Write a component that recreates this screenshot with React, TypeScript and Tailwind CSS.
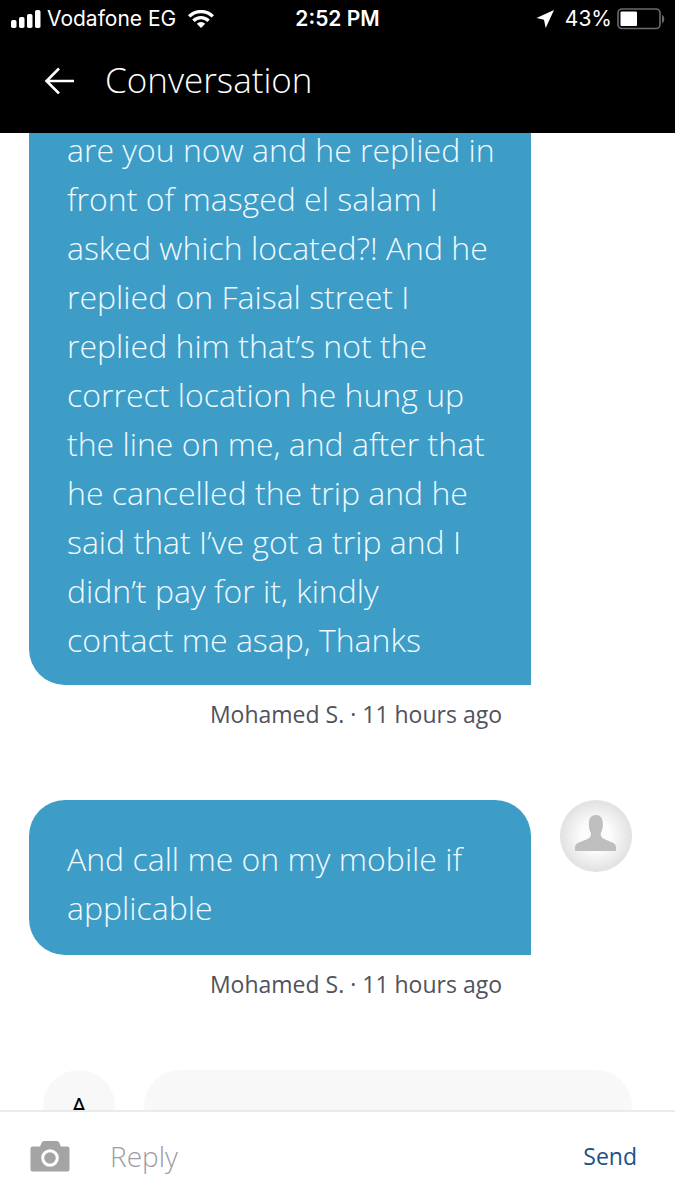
const messages = [
    {
        id: 1,
        text: 'are you now and he replied in\nfront of masged el salam I\nasked which located?! And he\nreplied on Faisal street I\nreplied him that’s not the\ncorrect location he hung up\nthe line on me, and after that\nhe cancelled the trip and he\nsaid that I’ve got a trip and I\ndidn’t pay for it, kindly\ncontact me asap, Thanks',
        meta: 'Mohamed S. · 11 hours ago',
        continued: true,
    },
    {
        id: 2,
        text: 'And call me on my mobile if\napplicable',
        meta: 'Mohamed S. · 11 hours ago',
        continued: false,
    },
];

function StatusBar() {
    return (
        <div className="grid h-[37px] grid-cols-[1fr_auto_1fr] items-center px-[10px] font-['Inter',sans-serif] text-[21px]">
            <div className="flex items-center">
                <svg className="h-[18px] w-[31px] shrink-0" viewBox="0 0 31 18" fill="currentColor">
                    <rect x="1" y="10" width="5.500" height="8" rx="1.8" />
                    <rect x="9" y="7" width="5.500" height="11" rx="1.8" />
                    <rect x="17" y="4" width="5.500" height="14" rx="1.8" />
                    <rect x="25" y="0" width="5.500" height="18" rx="1.8" />
                </svg>
                <span className="ml-[6px] whitespace-nowrap">Vodafone EG</span>
                <svg className="ml-[12px] h-[18px] w-[26px] shrink-0" viewBox="0 0 26 18" fill="none" stroke="currentColor" strokeWidth="3.4">
                    <path d="M1.2 6.4a16.7 16.7 0 0 1 23.6 0" />
                    <path d="M5.4 10.8a10.8 10.8 0 0 1 15.2 0" />
                    <path d="M13 18l-4.2-4.2a6 6 0 0 1 8.4 0z" fill="currentColor" stroke="none" />
                </svg>
            </div>
            <span className="text-center font-semibold">2:52 PM</span>
            <div className="flex items-center justify-end">
                <svg className="h-[18px] w-[18px]" viewBox="0 0 18 18" fill="currentColor">
                    <path d="M18 0L9.700 18L8 9.700L0.500 8z" />
                </svg>
                <span className="ml-[11px]">43%</span>
                <svg className="ml-[5px] h-[22px] w-[48px]" viewBox="0 0 48 22">
                    <rect x="1" y="1" width="42" height="19.5" rx="4" fill="none" stroke="#6b6b6b" strokeWidth="1.6" />
                    <rect x="3.5" y="3.5" width="16.5" height="14.5" rx="1" fill="#fff" />
                    <path d="M45 7c3 1 3 7 0 8z" fill="#6b6b6b" />
                </svg>
            </div>
        </div>
    );
}

function UserAvatar() {
    return (
        <svg className="h-[72px] w-[72px] shrink-0" viewBox="0 0 72 72" role="img" aria-label="Mohamed S.">
            <defs>
                <radialGradient id="avatar">
                    <stop offset="40%" stopColor="#fcfcfc" />
                    <stop offset="100%" stopColor="#e1e1e1" />
                </radialGradient>
            </defs>
            <circle cx="36" cy="36" r="36" fill="url(#avatar)" />
            <path
                d="M15 51v-3.500c0-2.500 1.500-4 4.500-5.200l7.500-3c3-1.200 4.200-2.800 4-6c-1.200-2-1.700-4-2-6.500c-.8-7.500 1.500-11.800 6.900-11.800s7.600 4.300 6.800 11.800c-.3 2.500-.9 4.500-2 6.500c-.2 3.200 1 4.800 4 6l7 3c3 1.200 4.300 2.700 4.300 5.200v3.500z"
                fill="#bebebe"
            />
        </svg>
    );
}

export default function App() {
    return (
        <div className="flex h-screen flex-col overflow-hidden bg-white font-['Open_Sans',sans-serif]">
            <header className="z-10 shrink-0 bg-black text-white">
                <StatusBar />
                <div className="flex h-[96px] items-center pb-[10px] pl-[41px]">
                    <button type="button" aria-label="Back">
                        <svg className="h-[28px] w-[36px]" viewBox="0 0 36 28" fill="none" stroke="currentColor" strokeWidth="2.6">
                            <path d="M33 15H5M18 2.500L5.500 15L18 27.500" />
                        </svg>
                    </button>
                    <h1 className="ml-[28px] text-[35px] font-light">Conversation</h1>
                </div>
            </header>

            <main className="min-h-0 flex-1 overflow-hidden">
                {/* list is scrolled, so the first bubble runs under the header */}
                <div className="-mt-2">
                    {messages.map((message) => (
                        <section key={message.id} className="mb-[71px]">
                            <div className="flex gap-[29px] pl-[29px] pr-[43px]">
                                <p
                                    className={`min-w-0 flex-1 whitespace-pre-line rounded-bl-[36px] bg-[#3d9dc7] pl-[38px] text-[32px] font-light leading-[49px] text-[#f0faff] ${
                                        message.continued ? 'pb-[21px]' : 'rounded-t-[36px] pb-[23px] pt-[34px]'
                                    }`}
                                >
                                    {message.text}
                                </p>
                                {message.continued ? <div className="w-[72px] shrink-0" /> : <UserAvatar />}
                            </div>
                            <p className="mr-[173px] mt-[14px] text-right text-[23px] leading-[30px] text-[#51525c]">{message.meta}</p>
                        </section>
                    ))}

                    <section className="flex gap-[29px] pl-[43px] pr-[43px]">
                        <div className="flex h-[72px] w-[72px] shrink-0 items-center justify-center rounded-full bg-[#f8f8f8] text-[26px] font-medium text-black">A</div>
                        <div className="h-[120px] flex-1 rounded-t-[36px] bg-[#f8f8f8]" />
                    </section>
                </div>
            </main>

            <footer className="z-10 flex h-[90px] shrink-0 items-center border-t-2 border-[#ebebeb] bg-white pl-[30px] pr-[38px]">
                <button type="button" aria-label="Add photo" className="text-[#a5a4a5]">
                    <svg className="h-[31px] w-[40px]" viewBox="0 0 40 31">
                        <path d="M2.500 5.500h7.500l1.800-4Q12.500 0 14 0h13q1.500 0 2.200 1.500L30.800 5.500H37.500q2 0 2 2v21q0 2-2 2H2.500q-2 0-2-2V7.500q0-2 2-2z" fill="currentColor" />
                        <circle cx="20" cy="17" r="7.300" fill="currentColor" stroke="#fff" strokeWidth="3" />
                    </svg>
                </button>
                <input
                    type="text"
                    aria-label="Reply"
                    placeholder="Reply"
                    className="ml-[40px] min-w-0 flex-1 bg-transparent text-[28px] font-light text-gray-800 outline-none placeholder:text-[#9c9ca4]"
                />
                <button type="button" className="text-[23px] text-[#1b5087]">
                    Send
                </button>
            </footer>
        </div>
    );
}
